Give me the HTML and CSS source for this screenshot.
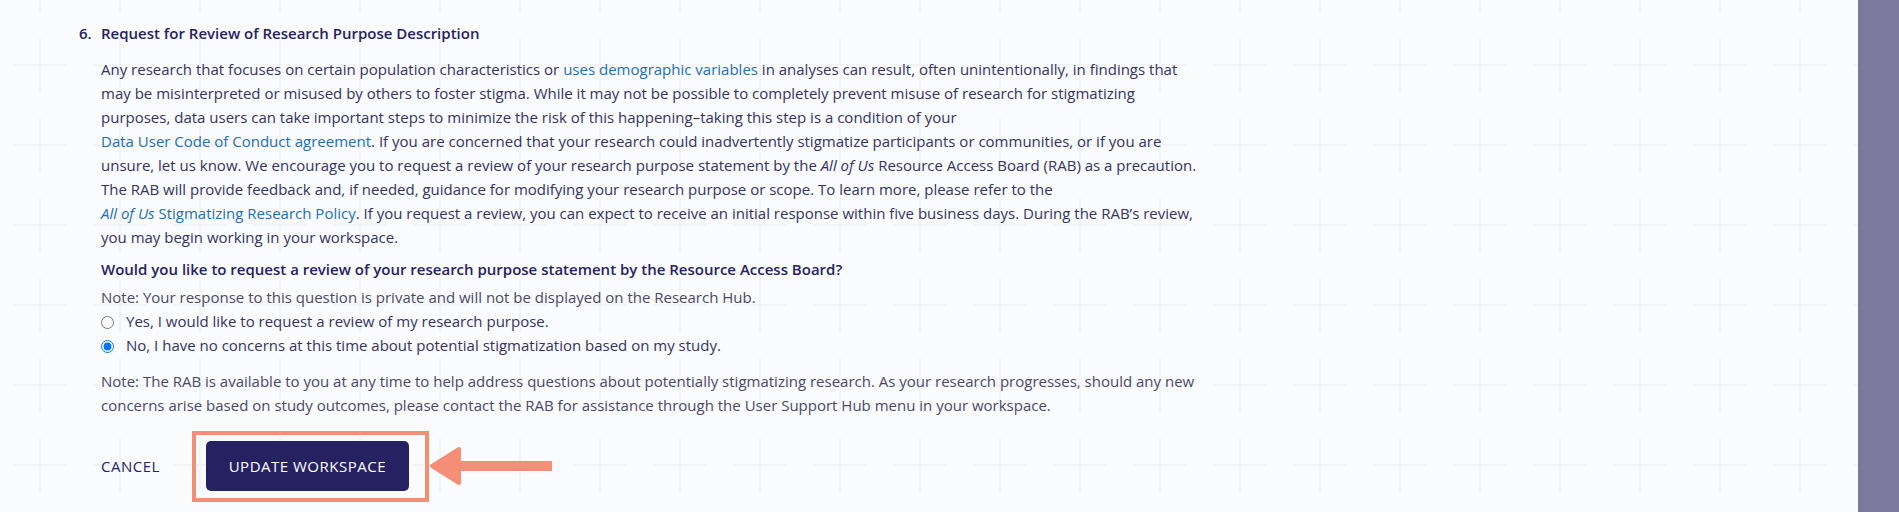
FILE: index.html
```html
<!DOCTYPE html>
<html lang="en">
<head>
<meta charset="utf-8">
<title>Update Workspace</title>
<link rel="stylesheet" href="styles.css">
</head>
<body>
<div class="layout">
  <main class="content">
    <section class="step">
      <h2 class="step-title"><span class="step-num">6.</span>Request for Review of Research Purpose Description</h2>
      <div class="step-body">
        <p class="desc">Any research that focuses on certain population characteristics or <a class="link" href="#">uses demographic variables</a> in analyses can result, often unintentionally, in findings that may be misinterpreted or misused by others to foster stigma. While it may not be possible to completely prevent misuse of research for stigmatizing purposes, data users can take important steps to minimize the risk of this happening–taking this step is a condition of your <a class="link block-link" href="#">Data User Code of Conduct agreement</a>. If you are concerned that your research could inadvertently stigmatize participants or communities, or if you are unsure, let us know. We encourage you to request a review of your research purpose statement by the <em>All of Us</em> Resource Access Board (RAB) as a precaution. The RAB will provide feedback and, if needed, guidance for modifying your research purpose or scope. To learn more, please refer to the <a class="link block-link" href="#"><em>All of Us</em> Stigmatizing Research Policy</a>. If you request a review, you can expect to receive an initial response within five business days. During the RAB’s review, you may begin working in your workspace.</p>
        <p class="question">Would you like to request a review of your research purpose statement by the Resource Access Board?</p>
        <p class="note">Note: Your response to this question is private and will not be displayed on the Research Hub.</p>
        <label class="choice"><input class="radio" type="radio" name="rab"><span>Yes, I would like to request a review of my research purpose.</span></label>
        <label class="choice"><input class="radio" type="radio" name="rab" checked><span>No, I have no concerns at this time about potential stigmatization based on my study.</span></label>
        <p class="note note-after">Note: The RAB is available to you at any time to help address questions about potentially stigmatizing research. As your research progresses, should any new concerns arise based on study outcomes, please contact the RAB for assistance through the User Support Hub menu in your workspace.</p>
      </div>
    </section>
    <div class="actions">
      <button class="btn-cancel" type="button">CANCEL</button>
      <div class="primary-wrap">
        <button class="btn-primary" type="button">UPDATE WORKSPACE</button>
        <span class="highlight"></span>
        <svg class="arrow" width="126" height="44" viewBox="0 0 126 44" aria-hidden="true">
          <polygon points="4,22 31,5 31,39" fill="#f58e76" stroke="#f58e76" stroke-width="4" stroke-linejoin="round"/>
          <rect x="29" y="17" width="95" height="10" fill="#f58e76"/>
        </svg>
      </div>
    </div>
  </main>
  <aside class="sidebar"></aside>
</div>
</body>
</html>
```
FILE: styles.css
```css
* { box-sizing: border-box; }

html, body {
  margin: 0;
  height: 100%;
}

body {
  font-family: "Open Sans", "Noto Sans", sans-serif;
  font-size: 15px;
  color: #34335f;
  background: #fafbfd;
}

.layout {
  display: flex;
  min-height: 100vh;
}

.content {
  flex: 1;
  padding: 23px 0 0 79px;
  background-color: #fafbfd;
  background-image: url("data:image/svg+xml,%3Csvg xmlns='http://www.w3.org/2000/svg' width='80' height='80'%3E%3Cpath d='M13 40h54M40 13v54' stroke='%23f1f2f6' stroke-width='1.5'/%3E%3C/svg%3E");
  background-position: 0 25px;
}

.sidebar {
  width: 41px;
  flex: none;
  background: #7b7a9e;
}

.step-title {
  display: flex;
  margin: 0 0 14px;
  font-size: 15px;
  font-weight: 600;
  line-height: 20px;
  color: #262262;
}

.step-num {
  width: 22px;
  flex: none;
}

.step-body {
  padding-left: 22px;
  width: 1126px;
}

.desc {
  margin: 0;
  line-height: 24px;
}

.link {
  color: #216fb4;
  text-decoration: none;
}

.block-link {
  display: inline-block;
}

.question {
  margin: 8px 0 0;
  line-height: 24px;
  font-weight: 600;
  color: #262262;
}

.note {
  margin: 4px 0 0;
  line-height: 24px;
  color: #4a4968;
}

.note-after {
  margin-top: 12px;
}

.choice {
  display: flex;
  align-items: center;
  height: 24px;
  color: #34335f;
}

.radio {
  width: 13px;
  height: 13px;
  margin: 2px 12px 0 0;
  flex: none;
}

.actions {
  display: flex;
  align-items: center;
  margin-top: 24px;
  padding-left: 22px;
}

.btn-cancel {
  margin: 0 46px 0 0;
  padding: 0;
  border: none;
  background: none;
  font-family: inherit;
  font-size: 15px;
  letter-spacing: 0.5px;
  color: #262262;
}

.primary-wrap {
  position: relative;
}

.btn-primary {
  display: block;
  width: 203px;
  height: 50px;
  padding: 0;
  border: none;
  border-radius: 5px;
  background: #262262;
  color: #ffffff;
  font-family: inherit;
  font-size: 15px;
  font-weight: 500;
  letter-spacing: 0.5px;
}

.highlight {
  position: absolute;
  left: -14px;
  top: -10px;
  width: 237px;
  height: 71px;
  border: 4px solid #f58e76;
}

.arrow {
  position: absolute;
  left: 222px;
  top: 3px;
}
```
